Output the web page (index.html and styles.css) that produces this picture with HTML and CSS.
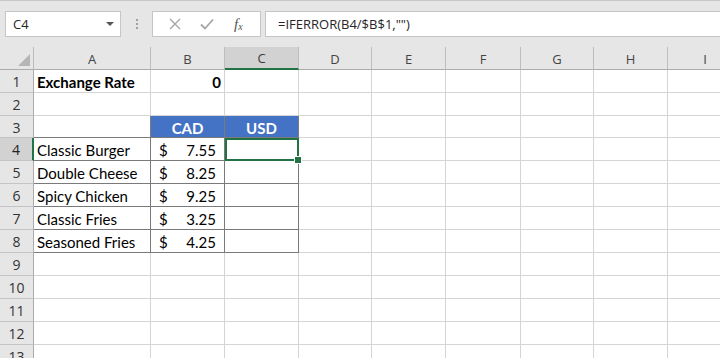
FILE: index.html
```html
<!DOCTYPE html>
<html>
<head>
<meta charset="utf-8">
<link rel="stylesheet" href="styles.css">
</head>
<body>
<div class="app">
  <div class="fbar">
    <div class="namebox"><span>C4</span><span class="caret"></span></div>
    <div class="grip"><i></i><i></i><i></i></div>
    <div class="btns">
      <svg class="ico" width="14" height="14" viewBox="0 0 14 14"><path d="M2 2 L12 12 M12 2 L2 12" stroke="#a6a6a6" stroke-width="1.4" fill="none"/></svg>
      <svg class="ico" width="16" height="14" viewBox="0 0 16 14"><path d="M2 7.5 L6 11.5 L14 2.5" stroke="#a6a6a6" stroke-width="1.8" fill="none"/></svg>
      <span class="fx">f<sub>x</sub></span>
    </div>
    <div class="formula">=IFERROR(B4/$B$1,"")</div>
  </div>
  <div class="sheet">
    <div class="h corner"><span class="tri"></span></div><div class="h ch">A</div><div class="h ch">B</div><div class="h ch sel">C</div><div class="h ch">D</div><div class="h ch">E</div><div class="h ch">F</div><div class="h ch">G</div><div class="h ch">H</div><div class="h ch last">I</div>

    <div class="h rh">1</div><div class="c b">Exchange Rate</div><div class="c b r">0</div><div class="c"></div><div class="c"></div><div class="c"></div><div class="c"></div><div class="c"></div><div class="c"></div><div class="c"></div>

    <div class="h rh">2</div><div class="c"></div><div class="c"></div><div class="c"></div><div class="c"></div><div class="c"></div><div class="c"></div><div class="c"></div><div class="c"></div><div class="c"></div>

    <div class="h rh">3</div><div class="c t tr"></div><div class="c t blue">CAD</div><div class="c t blue">USD</div><div class="c"></div><div class="c"></div><div class="c"></div><div class="c"></div><div class="c"></div><div class="c"></div>

    <div class="h rh sel">4</div><div class="c t">Classic Burger</div><div class="c t money"><span>$</span><span>7.55</span></div><div class="c t active"></div><div class="c"></div><div class="c"></div><div class="c"></div><div class="c"></div><div class="c"></div><div class="c"></div>

    <div class="h rh">5</div><div class="c t">Double Cheese</div><div class="c t money"><span>$</span><span>8.25</span></div><div class="c t"></div><div class="c"></div><div class="c"></div><div class="c"></div><div class="c"></div><div class="c"></div><div class="c"></div>

    <div class="h rh">6</div><div class="c t">Spicy Chicken</div><div class="c t money"><span>$</span><span>9.25</span></div><div class="c t"></div><div class="c"></div><div class="c"></div><div class="c"></div><div class="c"></div><div class="c"></div><div class="c"></div>

    <div class="h rh">7</div><div class="c t">Classic Fries</div><div class="c t money"><span>$</span><span>3.25</span></div><div class="c t"></div><div class="c"></div><div class="c"></div><div class="c"></div><div class="c"></div><div class="c"></div><div class="c"></div>

    <div class="h rh">8</div><div class="c t">Seasoned Fries</div><div class="c t money"><span>$</span><span>4.25</span></div><div class="c t"></div><div class="c"></div><div class="c"></div><div class="c"></div><div class="c"></div><div class="c"></div><div class="c"></div>

    <div class="h rh">9</div><div class="c"></div><div class="c"></div><div class="c"></div><div class="c"></div><div class="c"></div><div class="c"></div><div class="c"></div><div class="c"></div><div class="c"></div>

    <div class="h rh">10</div><div class="c"></div><div class="c"></div><div class="c"></div><div class="c"></div><div class="c"></div><div class="c"></div><div class="c"></div><div class="c"></div><div class="c"></div>

    <div class="h rh">11</div><div class="c"></div><div class="c"></div><div class="c"></div><div class="c"></div><div class="c"></div><div class="c"></div><div class="c"></div><div class="c"></div><div class="c"></div>

    <div class="h rh">12</div><div class="c"></div><div class="c"></div><div class="c"></div><div class="c"></div><div class="c"></div><div class="c"></div><div class="c"></div><div class="c"></div><div class="c"></div>

    <div class="h rh">13</div><div class="c"></div><div class="c"></div><div class="c"></div><div class="c"></div><div class="c"></div><div class="c"></div><div class="c"></div><div class="c"></div><div class="c"></div>
  </div>
</div>
</body>
</html>
```

FILE: styles.css
```css
* { box-sizing: border-box; }
html, body { margin: 0; padding: 0; }
body {
  width: 720px;
  height: 358px;
  overflow: hidden;
  background: #ffffff;
  font-family: "Open Sans", "Liberation Sans", sans-serif;
}
.app { width: 720px; }

.fbar {
  height: 47px;
  background: #e6e6e6;
  border-top: 1px solid #c8c8c8;
  display: flex;
  align-items: flex-start;
  padding-top: 10px;
  padding-left: 5px;
}
.namebox {
  width: 116px;
  height: 26px;
  background: #fff;
  border: 1px solid #c6c6c6;
  display: flex;
  align-items: center;
  justify-content: space-between;
  padding: 0 6px 0 7px;
  font-size: 13px;
  color: #262626;
}
.caret {
  width: 0; height: 0;
  border-left: 4px solid transparent;
  border-right: 4px solid transparent;
  border-top: 4px solid #555;
}
.grip {
  width: 31px;
  height: 26px;
  display: flex;
  flex-direction: column;
  align-items: center;
  justify-content: center;
  gap: 2px;
}
.grip i {
  display: block;
  width: 2px; height: 2px;
  background: #a0a0a0;
}
.btns {
  width: 109px;
  height: 26px;
  background: #fff;
  border: 1px solid #c6c6c6;
  display: flex;
  align-items: center;
  padding-left: 15px;
  gap: 17px;
}
.fx {
  font-family: "Liberation Serif", serif;
  font-style: italic;
  font-size: 15px;
  color: #555;
  margin-left: 2px;
}
.fx sub { font-size: 10px; vertical-align: -1px; }
.formula {
  flex: 1;
  height: 26px;
  margin-left: 4px;
  background: #fff;
  border: 1px solid #c6c6c6;
  border-right: none;
  font-size: 13px;
  color: #262626;
  padding-left: 12px;
  line-height: 24px;
}

.sheet {
  display: grid;
  grid-template-columns: 34px 117px 74px 74px 73px 74px 75px 73px 74px 74px;
  grid-template-rows: 23px 23px 23px 22px 23px 23px 23px 23px 23px 23px 23px 23px 23px 23px;
}
.h {
  background: #e6e6e6;
  color: #444;
  font-family: "Open Sans", sans-serif;
  font-size: 13px;
  display: flex;
  align-items: center;
  justify-content: center;
  padding-top: 1px;
}
.ch {
  border-right: 1px solid #bdbdbd;
  border-bottom: 1px solid #ababab;
}
.ch.last { border-right: none; }
.ch.sel {
  background: #d2d2d2;
  border-bottom: 2px solid #217346;
  color: #3a3a3a;
}
.corner {
  border-right: 1px solid #bdbdbd;
  border-bottom: 1px solid #ababab;
  position: relative;
}
.tri {
  position: absolute;
  right: 3px;
  bottom: 3px;
  width: 0; height: 0;
  border-left: 12px solid transparent;
  border-bottom: 12px solid #b5b5b5;
}
.rh {
  border-right: 1px solid #ababab;
  border-bottom: 1px solid #c4c4c4;
  font-size: 14px;
  color: #333;
}
.rh.sel {
  background: #d2d2d2;
  border-right: 2px solid #217346;
  color: #222;
}
.c {
  border-right: 1px solid #d4d4d4;
  border-bottom: 1px solid #d4d4d4;
  font-family: "Lato", "Liberation Sans", sans-serif;
  font-size: 15px;
  color: #000;
  display: flex;
  align-items: center;
  padding: 2px 3px 0 3px;
  white-space: nowrap;
}
.c.b { font-weight: bold; }
.c.r { justify-content: flex-end; }
.c.t {
  border-right: 1px solid #7a7a7a;
  border-bottom: 1px solid #7a7a7a;
}
.c.blue {
  background: #4472c4;
  color: #fff;
  font-weight: bold;
  justify-content: center;
}
.money {
  justify-content: space-between;
  padding: 2px 8px 0 8px;
}
.active {
  position: relative;
  outline: 2px solid #217346;
  outline-offset: -2px;
}
.active::after {
  content: "";
  position: absolute;
  right: -4px;
  bottom: -4px;
  width: 6px;
  height: 6px;
  background: #217346;
  border: 1px solid #fff;
}
```
